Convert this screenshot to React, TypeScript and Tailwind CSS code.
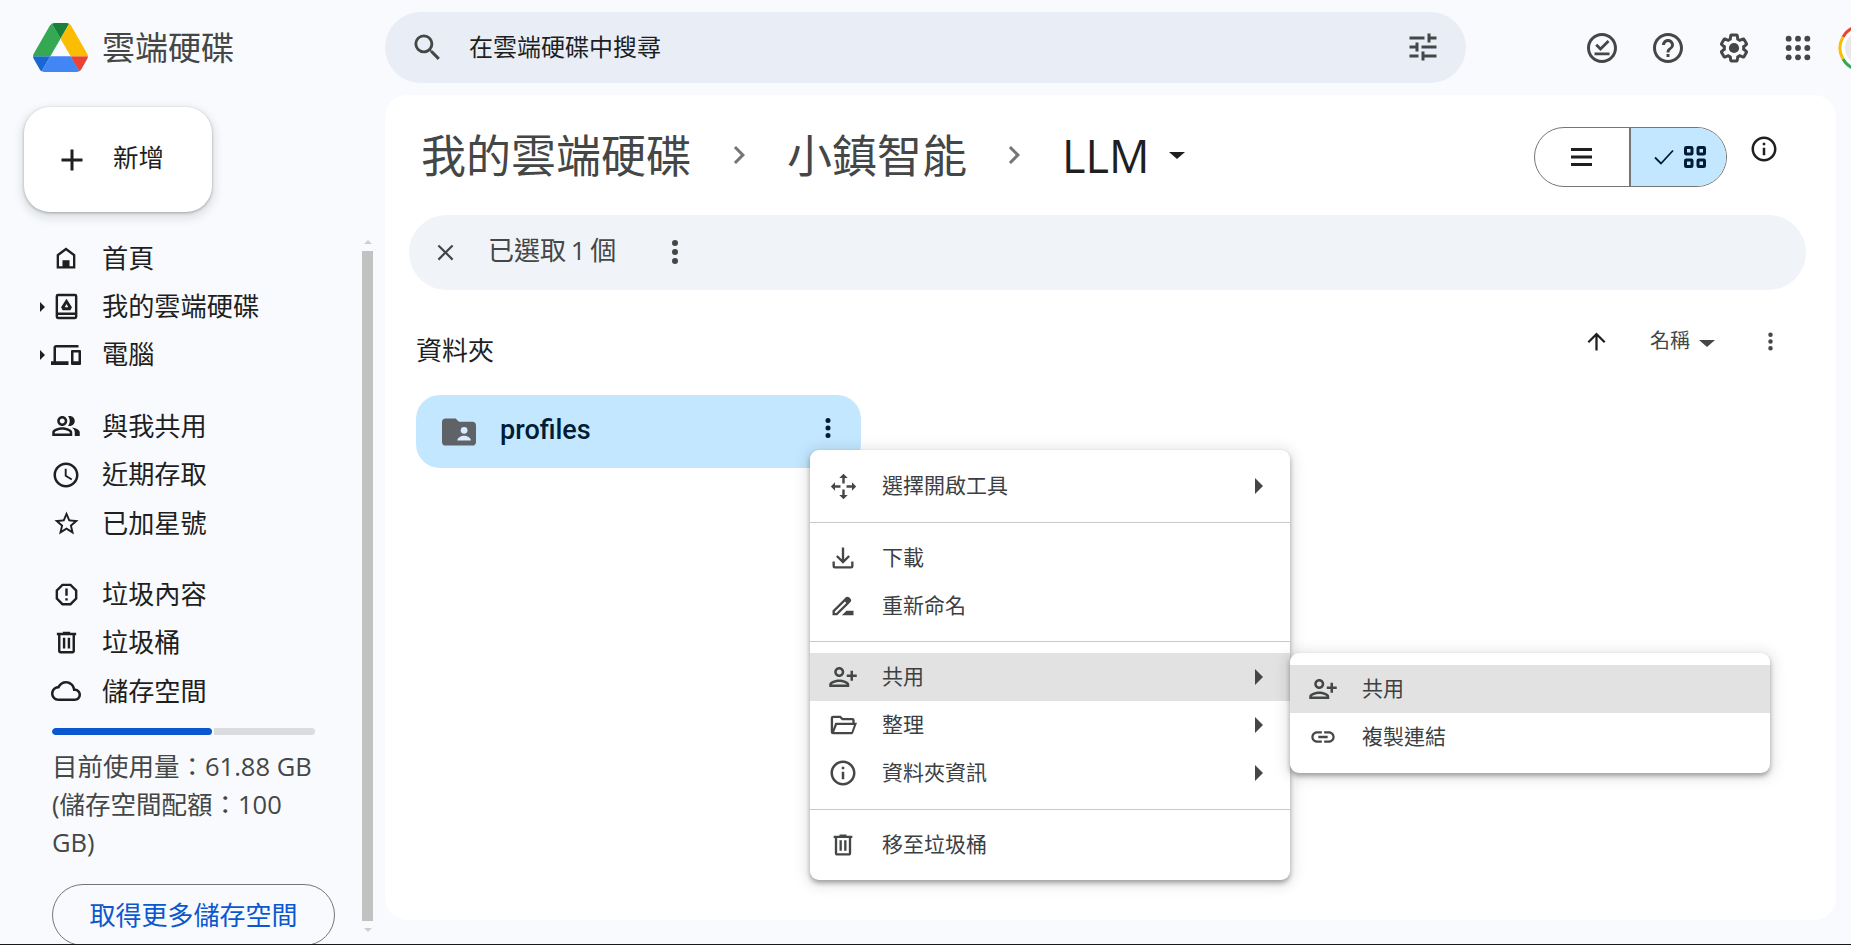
import React from "react";

type IP = { d?: string; size: number; className?: string; children?: React.ReactNode; vb?: string };
const I = ({ d, size, className = "", children, vb = "0 0 24 24" }: IP) => (
  <svg width={size} height={size} viewBox={vb} fill="currentColor" className={`shrink-0 ${className}`}>
    {d ? <path d={d} /> : null}
    {children}
  </svg>
);

const P = {
  search: "M15.5 14h-.79l-.28-.27A6.471 6.471 0 0 0 16 9.5 6.5 6.5 0 1 0 9.5 16c1.61 0 3.09-.59 4.23-1.57l.27.28v.79l5 4.99L20.49 19l-4.99-5zm-6 0C7.01 14 5 11.99 5 9.5S7.01 5 9.5 5 14 7.01 14 9.5 11.99 14 9.5 14z",
  tune: "M3 17v2h6v-2H3zM3 5v2h10V5H3zm10 16v-2h8v-2h-8v-2h-2v6h2zM7 9v2H3v2h4v2h2V9H7zm14 4v-2H11v2h10zm-6-4h2V7h4V5h-4V3h-2v6z",
  help: "M11 18h2v-2h-2v2zm1-16C6.48 2 2 6.48 2 12s4.48 10 10 10 10-4.48 10-10S17.52 2 12 2zm0 18c-4.41 0-8-3.59-8-8s3.59-8 8-8 8 3.59 8 8-3.59 8-8 8zm0-14c-2.21 0-4 1.79-4 4h2c0-1.1.9-2 2-2s2 .9 2 2c0 2-3 1.75-3 5h2c0-2.25 3-2.5 3-5 0-2.21-1.79-4-4-4z",
  gear: "M19.14 12.94c.04-.3.06-.61.06-.94 0-.32-.02-.64-.07-.94l2.03-1.58c.18-.14.23-.41.12-.61l-1.92-3.32c-.12-.22-.37-.29-.59-.22l-2.39.96c-.5-.38-1.03-.7-1.62-.94l-.36-2.54c-.04-.24-.24-.41-.48-.41h-3.84c-.24 0-.43.17-.47.41l-.36 2.54c-.59.24-1.13.57-1.62.94l-2.39-.96c-.22-.08-.47 0-.59.22L2.74 8.87c-.12.21-.08.47.12.61l2.03 1.58c-.05.3-.09.63-.09.94s.02.64.07.94l-2.03 1.58c-.18.14-.23.41-.12.61l1.92 3.32c.12.22.37.29.59.22l2.39-.96c.5.38 1.03.7 1.62.94l.36 2.54c.05.24.24.41.48.41h3.84c.24 0 .44-.17.47-.41l.36-2.54c.59-.24 1.13-.56 1.62-.94l2.39.96c.22.08.47 0 .59-.22l1.92-3.32c.12-.22.07-.47-.12-.61l-2.01-1.58z",
  devices: "M4 6h18V4H4c-1.1 0-2 .9-2 2v11H0v3h14v-3H4V6zm19 2h-6c-.55 0-1 .45-1 1v10c0 .55.45 1 1 1h6c.55 0 1-.45 1-1V9c0-.55-.45-1-1-1zm-1 9h-4v-7h4v7z",
  people: "M16.67 13.13C18.04 14.06 19 15.32 19 17v3h4v-3c0-2.18-3.57-3.47-6.33-3.87zM15 12c2.21 0 4-1.79 4-4s-1.79-4-4-4c-.47 0-.91.1-1.33.24C14.5 5.27 15 6.58 15 8s-.5 2.73-1.33 3.76c.42.14.86.24 1.33.24zM9 12c2.21 0 4-1.79 4-4s-1.79-4-4-4-4 1.79-4 4 1.79 4 4 4zm0-6c1.1 0 2 .9 2 2s-.9 2-2 2-2-.9-2-2 .9-2 2-2zM9 13c-2.67 0-8 1.34-8 4v3h16v-3c0-2.66-5.33-4-8-4zm6 5H3v-.99C3.2 16.29 6.3 15 9 15s5.8 1.29 6 2v1z",
  clock: "M11.99 2C6.47 2 2 6.48 2 12s4.47 10 9.99 10C17.52 22 22 17.52 22 12S17.52 2 11.99 2zM12 20c-4.42 0-8-3.58-8-8s3.58-8 8-8 8 3.58 8 8-3.58 8-8 8zm.5-13H11v6l5.25 3.15.75-1.23-4.5-2.67z",
  star: "M22 9.24l-7.19-.62L12 2 9.19 8.63 2 9.24l5.46 4.73L5.82 21 12 17.27 18.18 21l-1.63-7.03L22 9.24zM12 15.4l-3.76 2.27 1-4.28-3.32-2.88 4.38-.38L12 6.1l1.71 4.04 4.38.38-3.32 2.88 1 4.28L12 15.4z",
  report: "M15.73 3H8.27L3 8.27v7.46L8.27 21h7.46L21 15.73V8.27L15.73 3zM19 14.9L14.9 19H9.1L5 14.9V9.1L9.1 5h5.8L19 9.1v5.8zM11 7h2v6h-2zM11 15h2v2h-2z",
  trash: "M15 4V3H9v1H4v2h1v13c0 1.1.9 2 2 2h10c1.1 0 2-.9 2-2V6h1V4h-5zm2 15H7V6h10v13zM9 8h2v9H9zm4 0h2v9h-2z",
  cloud: "M19.35 10.04C18.67 6.59 15.64 4 12 4 9.11 4 6.6 5.64 5.35 8.04 2.34 8.36 0 10.91 0 14c0 3.31 2.69 6 6 6h13c2.76 0 5-2.24 5-5 0-2.64-2.05-4.78-4.65-4.96zM19 18H6c-2.21 0-4-1.79-4-4 0-2.05 1.53-3.76 3.56-3.97l1.07-.11.5-.95C8.08 7.14 9.94 6 12 6c2.62 0 4.88 1.86 5.39 4.43l.3 1.5 1.53.11c1.56.1 2.78 1.41 2.78 2.96 0 1.65-1.35 3-3 3z",
  download: "M19 15v4H5v-4H3v4a2 2 0 0 0 2 2h14a2 2 0 0 0 2-2v-4zM13 3h-2v10.17L7.41 9.59 6 11l6 6 6-6-1.41-1.41L13 13.17z",
  rename: "M18.41 5.8L17.2 4.59c-.78-.78-2.05-.78-2.83 0l-2.68 2.68L3 15.96V20h4.04l8.74-8.74 2.63-2.63c.79-.78.79-2.05 0-2.83zM6.21 18H5v-1.21l8.66-8.66 1.21 1.21L6.21 18zM11 20l4-4h6v4H11z",
  personAdd: "M13 8c0-2.21-1.79-4-4-4S5 5.79 5 8s1.79 4 4 4 4-1.79 4-4zm-2 0c0 1.1-.9 2-2 2s-2-.9-2-2 .9-2 2-2 2 .9 2 2zM1 18v2h16v-2c0-2.66-5.33-4-8-4s-8 1.34-8 4zm2 0c.2-.71 3.3-2 6-2 2.69 0 5.78 1.28 6 2H3zM20 15v-3h3v-2h-3V7h-2v3h-3v2h3v3h2z",
  info: "M11 7h2v2h-2zm0 4h2v6h-2zm1-9C6.48 2 2 6.48 2 12s4.48 10 10 10 10-4.48 10-10S17.52 2 12 2zm0 18c-4.41 0-8-3.59-8-8s3.59-8 8-8 8 3.59 8 8-3.59 8-8 8z",
  link: "M3.9 12c0-1.71 1.39-3.1 3.1-3.1h4V7H7c-2.76 0-5 2.24-5 5s2.24 5 5 5h4v-1.9H7c-1.71 0-3.1-1.39-3.1-3.1zM8 13h8v-2H8v2zm9-6h-4v1.9h4c1.71 0 3.1 1.39 3.1 3.1s-1.39 3.1-3.1 3.1h-4V17h4c2.76 0 5-2.24 5-5s-2.24-5-5-5z",
  more: "M12 8a2 2 0 1 0 0-4 2 2 0 0 0 0 4zm0 2a2 2 0 1 0 0 4 2 2 0 0 0 0-4zm0 6a2 2 0 1 0 0 4 2 2 0 0 0 0-4z",
  close: "M19 6.41L17.59 5 12 10.59 6.41 5 5 6.41 10.59 12 5 17.59 6.41 19 12 13.41 17.59 19 19 17.59 13.41 12z",
  up: "M4 12l1.41 1.41L11 7.83V20h2V7.83l5.58 5.59L20 12l-8-8-8 8z",
  chevron: "M10 6L8.59 7.41 13.17 12l-4.58 4.59L10 18l6-6z",
  plus: "M19 13h-6v6h-2v-6H5v-2h6V5h2v6h6v2z",
};

const Home = ({ size }: { size: number }) => (
  <I size={size}>
    <path d="M12 3L4 9v12h16V9l-8-6zm6 16h-3v-5H9v5H6v-9l6-4.5 6 4.5v9z" fillRule="evenodd" />
    <path d="M9.5 14.5h5V20h-5z" />
  </I>
);
const MyDrive = ({ size }: { size: number }) => (
  <I size={size}>
    <path fillRule="evenodd" d="M5 1.500h14a2 2 0 0 1 2 2v17a2 2 0 0 1-2 2H5a2 2 0 0 1-2-2v-17a2 2 0 0 1 2-2zm0 2V17h14V3.500H5zm0 15.500v1.500h14V19H5z" />
    <path fillRule="evenodd" d="M12 5.500l4.500 7.200-1.300 2.300H8.800l-1.300-2.300zm0 4.500l-1.500 2.600h3z" />
  </I>
);
const Tasks = ({ size }: { size: number }) => (
  <I size={size}>
    <path d="M12 2C6.48 2 2 6.48 2 12s4.48 10 10 10 10-4.48 10-10S17.52 2 12 2zm0 18c-4.41 0-8-3.59-8-8s3.59-8 8-8 8 3.59 8 8-3.59 8-8 8z" />
    <path d="M7.500 10.500l1.300-1.300 2.200 2.200 4.700-4.700 1.300 1.300-6 6zM7 15h10v1.800H7z" />
  </I>
);
const Apps = ({ size }: { size: number }) => (
  <I size={size}>
    {[5, 12, 19].map((y) => [5, 12, 19].map((x) => <circle key={`${x}-${y}`} cx={x} cy={y} r="2.2" />))}
  </I>
);
const Gear = ({ size }: { size: number }) => (
  <I size={size}>
    <path d={P.gear} transform="translate(1.2 1.2) scale(.9)" fill="none" stroke="currentColor" strokeWidth="2.2" />
    <circle cx="12" cy="12" r="3.4" />
  </I>
);
const OpenWith = ({ size }: { size: number }) => (
  <I size={size}>
    <path d="M12 1.500l3.500 3.500h-7zM12 22.500L8.500 19h7zM1.500 12L5 8.500v7zM22.500 12L19 15.500v-7z" />
    <path d="M11 5h2v4.500h-2zM11 14.500h2V19h-2zM5 11h4.500v2H5zM14.500 11H19v2h-4.500z" />
  </I>
);
const FolderOpen = ({ size }: { size: number }) => (
  <I size={size}>
    <path fillRule="evenodd" d="M3.500 4h6.500l2 2h8a2 2 0 0 1 2 2v2h2l-3.200 8.600A2 2 0 0 1 19 20H3.500a2 2 0 0 1-2-2V6a2 2 0 0 1 2-2zm0 2v9.500L5.400 10H20V8h-8.800l-2-2zm3.300 6L4.400 18h14.900l2.100-6z" />
  </I>
);

const Dropdown = ({ className = "" }: { className?: string }) => (
  <span className={`w-0 h-0 border-solid border-x-[8px] border-x-transparent border-t-[7px] ${className}`} />
);
const Right = () => (
  <span className="ml-auto w-0 h-0 border-solid border-y-[8px] border-y-transparent border-l-[8px] border-l-[#444746]" />
);

const Logo = () => (
  <svg width="55" height="49" viewBox="0 0 87.3 78" className="shrink-0">
    <path d="m6.6 66.85 3.85 6.65c.8 1.4 1.95 2.5 3.3 3.3l13.75-23.8h-27.5c0 1.55.4 3.1 1.2 4.5z" fill="#1967d2" />
    <path d="m43.65 25-13.75-23.8c-1.35.8-2.5 1.9-3.3 3.3l-25.4 44a9.06 9.06 0 0 0 -1.2 4.5h27.5z" fill="#34a853" />
    <path d="m73.55 76.8c1.35-.8 2.5-1.9 3.3-3.3l1.6-2.75 7.65-13.25c.8-1.4 1.2-2.95 1.2-4.5h-27.502l5.852 11.5z" fill="#ea4335" />
    <path d="m43.65 25 13.75-23.8c-1.35-.8-2.9-1.2-4.5-1.2h-18.5c-1.6 0-3.15.45-4.5 1.2z" fill="#188038" />
    <path d="m59.8 53h-32.3l-13.75 23.8c1.35.8 2.9 1.2 4.5 1.2h50.8c1.6 0 3.15-.45 4.5-1.2z" fill="#4285f4" />
    <path d="m73.4 26.5-12.7-22c-.8-1.4-1.95-2.5-3.3-3.3l-13.75 23.8 16.15 28h27.45c0-1.55-.4-3.1-1.2-4.5z" fill="#fbbc04" />
  </svg>
);

const Avatar = () => (
  <svg width="48" height="48" viewBox="0 0 48 48" className="shrink-0">
    <circle cx="24" cy="24" r="22" fill="#ffffff" />
    <circle cx="24" cy="24" r="17" fill="#e9e9e9" />
    <path d="M24 2A22 22 0 0 0 5 13" fill="none" stroke="#ea4335" strokeWidth="3" />
    <path d="M5 13A22 22 0 0 0 5 35" fill="none" stroke="#fbbc04" strokeWidth="3" />
    <path d="M5 35A22 22 0 0 0 24 46" fill="none" stroke="#34a853" strokeWidth="3" />
  </svg>
);

const NavRow = ({ icon, text, arrow }: { icon: React.ReactNode; text: string; arrow?: boolean }) => (
  <div className="flex items-center h-[48.4px] text-[#1f1f1f] text-[26.2px] leading-none">
    <div className="w-[45px] flex justify-end">
      {arrow ? <span className="w-0 h-0 border-solid border-y-[5px] border-y-transparent border-l-[5px] border-l-[#1f1f1f]" /> : null}
    </div>
    <div className="w-[42px] flex justify-center">{icon}</div>
    <span className="ml-[15px] -mt-[1px]">{text}</span>
  </div>
);

const MenuRow = ({ icon, text, arrow, active }: { icon: React.ReactNode; text: string; arrow?: boolean; active?: boolean }) => (
  <div className={`flex items-center h-[48px] pr-[27px] text-[21px] leading-none text-[#3c4043] ${active ? "bg-[#e2e2e2]" : ""}`}>
    <div className="w-[66px] flex justify-center text-[#444746]">{icon}</div>
    <span className="ml-[6px] -mt-[2px]">{text}</span>
    {arrow ? <Right /> : null}
  </div>
);

export default function App() {
  return (
    <div
      className="relative w-[1851px] h-[945px] overflow-hidden bg-[#f8fafd] border-b border-[#1a1a1a] flex flex-col"
      style={{ fontFamily: '"Open Sans", "Noto Sans CJK TC", sans-serif' }}
    >
      {/* header */}
      <header className="h-[95px] shrink-0 flex items-center">
        <div className="w-[385px] shrink-0 flex items-center pl-[33px] pb-[1px]">
          <Logo />
          <span className="ml-[14px] text-[33px] leading-none text-[#444746]">雲端硬碟</span>
        </div>
        <div className="w-[1081px] h-[71px] shrink-0 -mt-[1px] rounded-full bg-[#e9eef6] flex items-center pl-[25px] pr-[25px] text-[#444746]">
          <I d={P.search} size={35} />
          <span className="ml-[24px] text-[24px] leading-none text-[#1f1f1f]">在雲端硬碟中搜尋</span>
          <I d={P.tune} size={36} className="ml-auto" />
        </div>
        <div className="flex items-center shrink-0 ml-[118px] text-[#444746]">
          <div className="w-[36px] flex justify-center"><Tasks size={36} /></div>
          <div className="w-[36px] ml-[30px] flex justify-center"><I d={P.help} size={36} /></div>
          <div className="w-[36px] ml-[30px] flex justify-center"><Gear size={36} /></div>
          <div className="w-[30px] ml-[31px] flex justify-center"><Apps size={32} /></div>
          <div className="ml-[25px]"><Avatar /></div>
        </div>
      </header>

      <div className="flex flex-1 min-h-0">
        {/* sidebar */}
        <aside className="w-[385px] shrink-0 flex overflow-hidden">
          <div className="w-[362px] shrink-0 flex flex-col">
            <button className="ml-[24px] mt-[12px] w-[188px] h-[105px] shrink-0 rounded-[26px] bg-white flex items-center pl-[30px] shadow-[0_1px_3px_rgba(60,64,67,0.4),0_4px_8px_3px_rgba(60,64,67,0.12)] text-[#1f1f1f]">
              <I d={P.plus} size={36} />
              <span className="ml-[23px] text-[25.5px] leading-none -mt-[3px]">新增</span>
            </button>
            <nav className="mt-[22px] flex flex-col shrink-0">
              <NavRow icon={<Home size={28} />} text="首頁" />
              <NavRow arrow icon={<MyDrive size={29} />} text="我的雲端硬碟" />
              <NavRow arrow icon={<I d={P.devices} size={30} />} text="電腦" />
              <div className="h-[23px]" />
              <NavRow icon={<I d={P.people} size={30} />} text="與我共用" />
              <NavRow icon={<I d={P.clock} size={30} />} text="近期存取" />
              <NavRow icon={<I d={P.star} size={29} />} text="已加星號" />
              <div className="h-[23px]" />
              <NavRow icon={<I d={P.report} size={29} />} text="垃圾內容" />
              <NavRow icon={<I d={P.trash} size={29} />} text="垃圾桶" />
              <NavRow icon={<I d={P.cloud} size={30} />} text="儲存空間" />
            </nav>
            <div className="ml-[52px] mt-[12px] w-[263px] h-[7px] shrink-0 flex rounded-full overflow-hidden gap-[2px]">
              <div className="w-[160px] bg-[#0b57d0] rounded-full" />
              <div className="flex-1 bg-[#dadce0]" />
            </div>
            <p className="ml-[52px] mt-[12px] w-[270px] text-[25.5px] leading-[38px] text-[#444746] shrink-0">
              目前使用量：61.88 GB (儲存空間配額：100 GB)
            </p>
            <button className="ml-[52px] mt-[23px] w-[283px] h-[62px] shrink-0 rounded-full border border-[#747775] text-[#0b57d0] text-[26px] leading-none">
              取得更多儲存空間
            </button>
          </div>
          <div className="w-[11px] shrink-0 flex flex-col items-center mt-[145px] mb-[10px]">
            <span className="w-0 h-0 border-solid border-x-[4px] border-x-transparent border-b-[4px] border-b-[#cfcfcf] mb-[7px]" />
            <div className="w-[11px] h-[670px] bg-[#c2c2c2]" />
            <span className="w-0 h-0 border-solid border-x-[4px] border-x-transparent border-t-[4px] border-t-[#cfcfcf] mt-[7px]" />
          </div>
        </aside>

        {/* main */}
        <main className="relative w-[1451px] h-[825px] rounded-[22px] bg-white flex flex-col">
          <div className="h-[120px] shrink-0 flex items-center pl-[36px] text-[#444746]">
            <span className="text-[45px] leading-none">我的雲端硬碟</span>
            <I d={P.chevron} size={36} className="ml-[30px] text-[#757575]" />
            <span className="ml-[30px] text-[45px] leading-none">小鎮智能</span>
            <I d={P.chevron} size={36} className="ml-[29px] text-[#757575]" />
            <span className="ml-[30px] text-[45px] leading-none text-[#1f1f1f]">LLM</span>
            <Dropdown className="ml-[20px] border-t-[#1f1f1f]" />
            <div className="ml-auto mr-[109px] mt-[4px] w-[193px] h-[60px] flex rounded-full border border-[#747775] overflow-hidden">
              <div className="w-[94px] flex items-center justify-center text-[#1f1f1f]">
                <svg width="22" height="20" viewBox="0 0 22 20" fill="currentColor">
                  <path d="M0 1h21v3H0zM0 8.5h21v3H0zM0 16h21v3H0z" />
                </svg>
              </div>
              <div className="w-[1.5px] bg-[#747775]" />
              <div className="flex-1 bg-[#c2e7ff] flex items-center justify-center gap-[10px] text-[#001d35] pl-[3px]">
                <svg width="20" height="16" viewBox="0 0 20 16" fill="none" stroke="currentColor" strokeWidth="1.8">
                  <path d="M1 8.5l6 6L19 1.5" />
                </svg>
                <svg width="22" height="22" viewBox="0 0 22 22" fill="none" stroke="currentColor" strokeWidth="3">
                  <rect x="1.5" y="1.5" width="6.5" height="6.5" rx=".8" />
                  <rect x="14" y="1.5" width="6.5" height="6.5" rx=".8" />
                  <rect x="1.5" y="14" width="6.5" height="6.5" rx=".8" />
                  <rect x="14" y="14" width="6.5" height="6.5" rx=".8" />
                </svg>
              </div>
            </div>
          </div>

          <I d={P.info} size={30} className="absolute left-[1364px] top-[39px] text-[#1f1f1f]" />

          <div className="mx-[24px] w-[1397px] h-[75px] shrink-0 rounded-full bg-[#f0f4f9] flex items-center pl-[23px] text-[#444746]">
            <I d={P.close} size={27} />
            <span className="ml-[29px] text-[26px] leading-none -mt-[6px] [word-spacing:-2px]">已選取 1 個</span>
            <I d={P.more} size={36} className="ml-[41px] -mt-[1px]" />
          </div>

          <div className="ml-[31px] mt-[45px] h-[30px] shrink-0 flex items-center pr-[52px] text-[#1f1f1f]">
            <span className="text-[26px] leading-none">資料夾</span>
            <I d={P.up} size={27} className="ml-auto -mt-[18px]" />
            <span className="ml-[40px] -mt-[18px] text-[20px] leading-none text-[#444746]">名稱</span>
            <Dropdown className="ml-[9px] -mt-[14px] border-t-[#444746]" />
            <I d={P.more} size={27} className="ml-[42px] -mt-[18px] text-[#444746]" />
          </div>

          <div className="ml-[31px] mt-[30px] w-[445px] h-[73px] shrink-0 rounded-[24px] bg-[#c2e7ff] flex items-center pl-[26px] pr-[18px] text-[#001d35]">
            <svg width="34" height="30" viewBox="2 3.5 20 17" className="shrink-0">
              <path d="M20 6h-8l-2-2H4c-1.1 0-2 .9-2 2v12c0 1.1.9 2 2 2h16c1.1 0 2-.9 2-2V8c0-1.1-.9-2-2-2z" fill="#5f6368" />
              <circle cx="15" cy="11" r="2" fill="#dbeafe" />
              <path d="M11 17c0-1.8 2.4-2.8 4-2.8s4 1 4 2.8z" fill="#dbeafe" />
            </svg>
            <span className="ml-[24px] text-[27px] leading-none font-medium -mt-[2px]" style={{ fontFamily: "Roboto, sans-serif" }}>profiles</span>
            <I d={P.more} size={30} className="ml-auto -mt-[7px]" />
          </div>
        </main>
      </div>

      {/* context menu */}
      <div className="absolute left-[810px] top-[450px] w-[480px] pt-[12px] pb-[11px] rounded-[9px] bg-white shadow-[0_3px_5px_rgba(0,0,0,0.32),0_2px_14px_4px_rgba(0,0,0,0.1)]">
        <MenuRow icon={<OpenWith size={29} />} text="選擇開啟工具" arrow />
        <div className="h-px bg-[#c9c9c9] mt-[12px] mb-[11px]" />
        <MenuRow icon={<I d={P.download} size={28} />} text="下載" />
        <MenuRow icon={<I d={P.rename} size={28} />} text="重新命名" />
        <div className="h-px bg-[#c9c9c9] mt-[11px] mb-[11px]" />
        <MenuRow active icon={<I d={P.personAdd} size={30} />} text="共用" arrow />
        <MenuRow icon={<FolderOpen size={28} />} text="整理" arrow />
        <MenuRow icon={<I d={P.info} size={30} />} text="資料夾資訊" arrow />
        <div className="h-px bg-[#c9c9c9] mt-[12px] mb-[11px]" />
        <MenuRow icon={<I d={P.trash} size={28} />} text="移至垃圾桶" />
      </div>

      {/* sub menu */}
      <div className="absolute left-[1290px] top-[653px] w-[480px] py-[12px] rounded-[9px] bg-white shadow-[0_3px_5px_rgba(0,0,0,0.32),0_2px_14px_4px_rgba(0,0,0,0.1)]">
        <MenuRow active icon={<I d={P.personAdd} size={30} />} text="共用" />
        <MenuRow icon={<I d={P.link} size={28} />} text="複製連結" />
      </div>
    </div>
  );
}
